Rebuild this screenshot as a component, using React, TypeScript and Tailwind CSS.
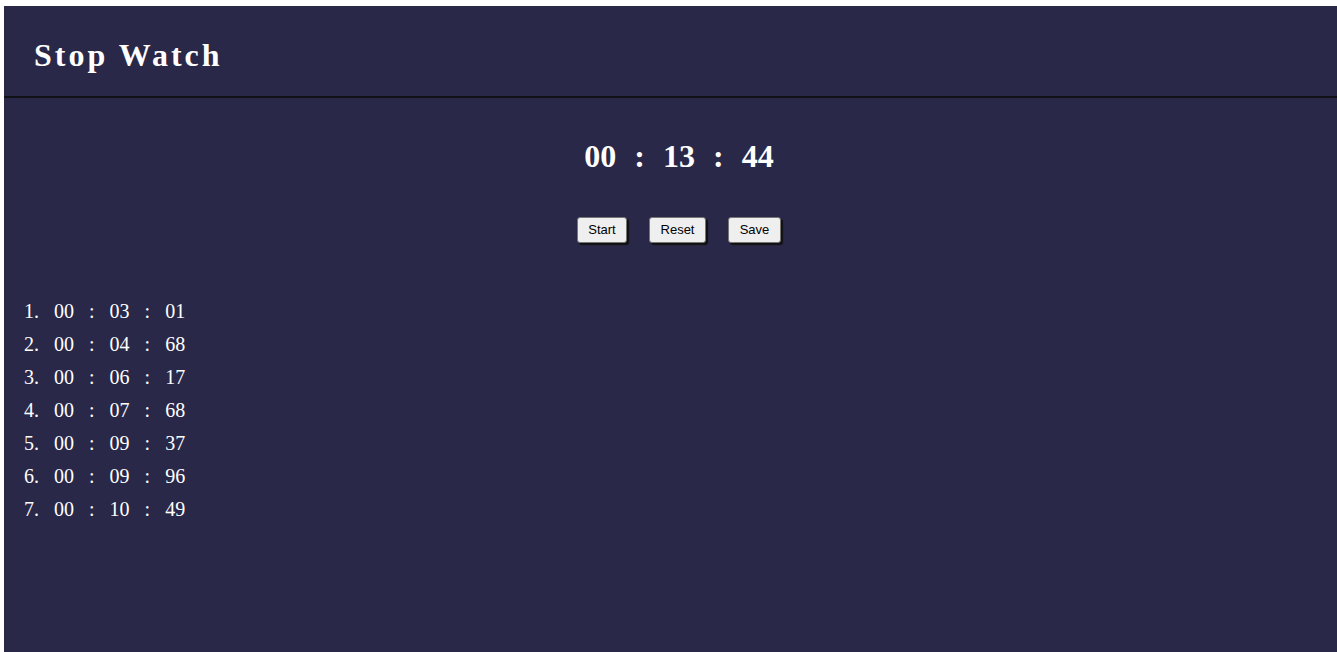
const laps = [
  ["00", "03", "01"],
  ["00", "04", "68"],
  ["00", "06", "17"],
  ["00", "07", "68"],
  ["00", "09", "37"],
  ["00", "09", "96"],
  ["00", "10", "49"],
]

const App = () => {
  return (
    <div className="w-full h-[652px] bg-white pt-[6px] pl-[4px] overflow-hidden font-['Liberation_Serif',serif]">
      <div className="w-full h-full bg-[#292848] text-white">
        <div className="h-[92px] flex items-center pl-[30px] border-b-2 border-[#111118]">
          <h1 className="text-[32px] font-bold tracking-[3px] mt-[8px]">Stop Watch</h1>
        </div>
        <div className="flex flex-col items-center pl-[17px]">
          <div className="flex items-center text-[32px] font-bold mt-[39px] h-[38px]">
            <span>00</span>
            <span className="mx-[18px]">:</span>
            <span>13</span>
            <span className="mx-[18px]">:</span>
            <span>44</span>
          </div>
          <div className="flex gap-[22px] mt-[42px] font-['Liberation_Sans',sans-serif] text-[13px] text-black">
            <button className="h-[26px] w-[50px] bg-[#efefef] border border-[#767676] rounded-[3px] shadow-[2px_2px_1px_#111]">Start</button>
            <button className="h-[26px] w-[57px] bg-[#efefef] border border-[#767676] rounded-[3px] shadow-[2px_2px_1px_#111]">Reset</button>
            <button className="h-[26px] w-[53px] bg-[#efefef] border border-[#767676] rounded-[3px] shadow-[2px_2px_1px_#111]">Save</button>
          </div>
        </div>
        <ol className="mt-[51px] pl-[20px] text-[20px]">
          {laps.map((l, i) => (
            <li key={i} className="flex h-[33px] items-center">
              <span className="w-[30px]">{i + 1}.</span>
              <span>{l[0]}</span>
              <span className="mx-[15px]">:</span>
              <span>{l[1]}</span>
              <span className="mx-[15px]">:</span>
              <span>{l[2]}</span>
            </li>
          ))}
        </ol>
      </div>
    </div>
  )
}

export default App
